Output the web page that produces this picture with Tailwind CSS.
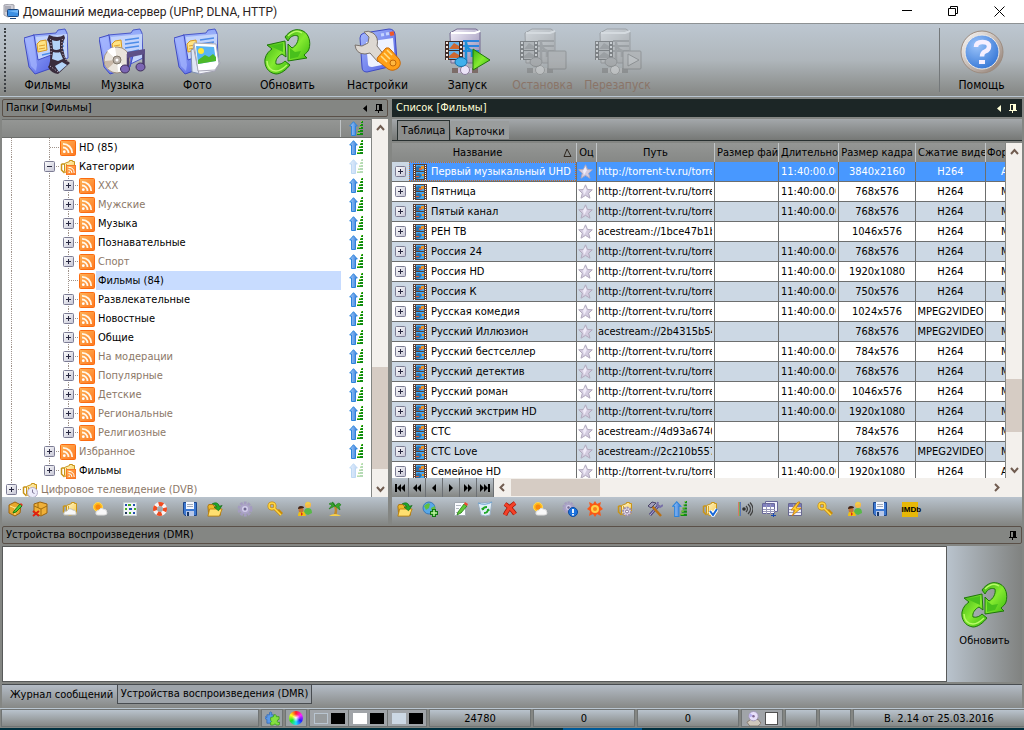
<!DOCTYPE html>
<html lang="ru">
<head>
    <meta charset="UTF-8">
    <meta name="viewport" content="width=device-width, initial-scale=1.0">
    <title>Домашний медиа-сервер (UPnP, DLNA, HTTP)</title>
    <script src="https://cdn.jsdelivr.net/npm/@tailwindcss/browser@4"></script>
</head>
<body class="h-screen flex flex-col overflow-hidden bg-[#848683] text-black text-[11px] leading-[14px] font-['DejaVu_Sans_Condensed','Noto_Sans',sans-serif]">
    <!-- icons -->
    <svg class="absolute w-0 h-0" aria-hidden="true">
        <defs>
            <linearGradient id="gBlue" x1="0" y1="0" x2="1" y2="1"><stop offset="0" stop-color="#a9bcff"/><stop offset="1" stop-color="#4c5be0"/></linearGradient>
            <linearGradient id="gPage" x1="0" y1="0" x2="0" y2="1"><stop offset="0" stop-color="#8fa6f8"/><stop offset="1" stop-color="#dbe8ff"/></linearGradient>
            <linearGradient id="gGreen" x1="0" y1="0" x2="1" y2="1"><stop offset="0" stop-color="#3cb014"/><stop offset="0.5" stop-color="#84ea30"/><stop offset="1" stop-color="#38b80e"/></linearGradient>
            <linearGradient id="gOrange" x1="0" y1="0" x2="1" y2="1"><stop offset="0" stop-color="#ffb458"/><stop offset="1" stop-color="#fd7820"/></linearGradient>
            <linearGradient id="gArrow" x1="0" y1="0" x2="1" y2="0"><stop offset="0" stop-color="#a8d0fc"/><stop offset="1" stop-color="#3478d8"/></linearGradient>
            <linearGradient id="gBox" x1="0" y1="0" x2="1" y2="1"><stop offset="0" stop-color="#ffffff"/><stop offset="1" stop-color="#c4c4d4"/></linearGradient>
            <linearGradient id="gYellow" x1="0" y1="0" x2="1" y2="1"><stop offset="0" stop-color="#fff8d0"/><stop offset="1" stop-color="#f8c848"/></linearGradient>
            <linearGradient id="gServer" x1="0" y1="0" x2="1" y2="1"><stop offset="0" stop-color="#f4f0fa"/><stop offset="1" stop-color="#9088b0"/></linearGradient>
            <linearGradient id="gRing" x1="0" y1="0" x2="1" y2="1"><stop offset="0" stop-color="#ffffff"/><stop offset="1" stop-color="#8c786c"/></linearGradient>
            <radialGradient id="gHelp" cx="0.35" cy="0.3" r="0.8"><stop offset="0" stop-color="#9cc4fa"/><stop offset="1" stop-color="#2f72d4"/></radialGradient>
        </defs>

        <symbol id="folder-big" viewBox="0 0 48 48">
            <path d="M9 7 32 5l2-3 7-1 2 4 1 25-31 15z" fill="url(#gPage)" stroke="#4a58c8" stroke-linejoin="round"/>
            <path d="M12 9l31-3v22l-29 12z" fill="#c3d4fc"/>
            <path d="M26 12l14-2M26 16l14-2M26 20l14-2M18 27l22-5" stroke="#4c8ce8" stroke-width="1.5"/>
            <path d="M13 16l3-3 6-1 1 10-9 2z" fill="#ffe484" stroke="#d89820"/>
            <path d="M15 18l6-1M15 21l6-1" stroke="#e0a030"/>
            <path d="M0 10l10-3 4 25 21-8-4 15-20 7-6-7z" fill="url(#gBlue)" stroke="#3f4bc4" stroke-linejoin="round"/>
            <path d="M2 11l7-2 4 28-1 6-5-5z" fill="#a5b6ff" opacity=".7"/>
        </symbol>
        <symbol id="films" viewBox="0 0 48 48">
            <use href="#folder-big"/>
            <path d="M25 7q9 4 15 0l1 3q-4 6-1 15 1 7 6 10l-12 11q-7-1-10-7 3-4 2-15 0-10-3-12z" fill="#392c3c"/>
            <path d="M28 12q5 2 8 0l0 9q-4 2-7 0zM29 24q5 1 7 0l3 7-5 2-6-2zM31 38l7-4 5 3-8 7z" fill="#b4d4f8"/>
            <path d="M26.500 11q1 8 .5 16M38.500 11q-2 9 1 17l4 6M26 38l8 6" fill="none" stroke="#d8cce0" stroke-dasharray="1 2"/>
        </symbol>
        <symbol id="music" viewBox="0 0 48 48">
            <use href="#folder-big"/>
            <circle cx="18" cy="32" r="13" fill="#e9e4dc" stroke="#a09080"/>
            <path d="M18 32 8 23a13 13 0 0 1 8-4zM18 32l9 9a13 13 0 0 1-8 3z" fill="#fff"/>
            <path d="M18 32 5.500 33a13 13 0 0 0 3 8z" fill="#c8b8a8"/>
            <circle cx="18" cy="32" r="4" fill="#b8b0a8" stroke="#80786c"/><circle cx="18" cy="32" r="1.500" fill="#fff"/>
            <path d="M29 26v14M44.500 23v15" stroke="#4c3f70" stroke-width="2.500"/>
            <path d="M28 24l18-3v5l-18 4z" fill="#5d5088"/>
            <ellipse cx="26" cy="41" rx="4.500" ry="4" fill="#7c66b4" stroke="#40305c"/>
            <ellipse cx="41.500" cy="39" rx="4.500" ry="4" fill="#7c66b4" stroke="#40305c"/>
        </symbol>
        <symbol id="photo" viewBox="0 0 48 48">
            <use href="#folder-big"/>
            <path d="M17 22l8-4 12 22-10 6-9-2z" fill="#dfe6f4" stroke="#8090b0"/>
            <path d="M19 17l19-2 8 20-5 8-16 3z" fill="#f4f6fc" stroke="#a0a0b0"/>
            <path d="M20 15l22 1 3 20-4 6-17 1z" fill="#fff" stroke="#a8a8b8"/>
            <path d="M22 18l18 1 2 14-18 3z" fill="#58b4f4"/>
            <circle cx="27" cy="23" r="3" fill="#ffe838"/>
            <path d="M24 32l7-5 4 2 4-3 3 3v4l-18 3z" fill="#4cb828"/>
        </symbol>
        <symbol id="refresh" viewBox="0 0 48 48">
            <g stroke="#1e7808" stroke-linejoin="round" fill="url(#gGreen)">
                <path d="M3 17l18-4 1 16-4-3c-4 2-7 6-6 10 4 1 7-1 9-3l5 4c-4 5-9 9-14 9C4 45 0 38 1 31c1-5 4-8 7-10z"/>
                <path d="M21 9C26 2 33 0 39 3c6 3 8 11 6 18-1 3-3 4-5 6l3 3-19 3V16l4 4c4-2 7-7 6-12-3-1-7-1-10 5z"/>
            </g>
            <path d="M3 33c0 6 4 10 9 10 4 0 8-3 11-6M24 8c5-5 10-6 14-3" fill="none" stroke="#b8fa68" stroke-width="1.500"/>
            <path d="M6 18l13-3v9zM26 20l5 4 6-1-3 6-8 2z" fill="#48c01c"/>
        </symbol>
        <symbol id="settings" viewBox="0 0 48 48">
            <path d="M6 10q0-4 4-5l25-4q5 0 6 5l2 27q0 4-4 5l-26 6q-5 0-5-5z" fill="url(#gBlue)" stroke="#3f4bc4"/>
            <path d="M12 14l27-4 2 22q0 3-3 3l-20 4q-4 0-4-3z" fill="#eef2ff"/>
            <path d="M27 7l3-.5M32 6l3-.5" stroke="#c4d4ff" stroke-width="3"/><path d="M36 6l4-.7" stroke="#f05828" stroke-width="4"/>
            <path d="M1 17q1 9 10 9l5-1 8 9 7-6-8-10q2-9-4-13-5-3-9-1l5 5-1 6-6 3z" fill="#ddd8d2" stroke="#7c746e"/>
            <path d="M24 29l8-9q3-1 5 2l8 9q3 5-1 9-5 4-10 1l-10-8q-2-2 0-4z" fill="#ffa018" stroke="#c86808"/>
            <path d="M27 28l6 6M30 25l6 6M33 22l5 5" stroke="#ffe088" stroke-width="1.500"/>
            <circle cx="39" cy="35" r="3" fill="#ffb840" stroke="#c06808"/>
        </symbol>
        <symbol id="server-base" viewBox="0 0 48 48">
            <path d="M6 5l7-4h19l4 3v31H7z" fill="url(#gServer)" stroke="#746a90"/>
            <path d="M7 5h24l5-2" fill="none" stroke="#fff" stroke-width="2"/>
            <path d="M19 13h16M19 18h16M19 23h16" stroke="#2c84dc" stroke-width="2"/>
            <path d="M21 35v5M8 42.500h26" stroke="#c8bcd8" stroke-width="5"/><path d="M8 40h6v5H8zM28 40h6v5h-6z" fill="#7c6c68"/>
            <circle cx="21" cy="42" r="4.500" fill="#ece4f8" stroke="#8a7c98"/>
            <path d="M1 13h18v19H1z" fill="#402c28"/>
            <path d="M5 14h10v8H5zM5 23h10v8H5z" fill="#68b4ec"/>
            <path d="M6 20l4-5 5 3v3H5zM5 28l5-4 5 3v3H5z" fill="#d06830"/>
            <path d="M3 14v18M17 14v18" stroke="#f4e8e0" stroke-width="2" stroke-dasharray="2 2"/>
            <path d="M22 13v20M22 15q1 6 6 8v6" fill="none" stroke="#1c90d8" stroke-width="2.500"/>
            <ellipse cx="17" cy="34" rx="6" ry="4.500" fill="#40b0ec" stroke="#1670a8"/>
        </symbol>
        <symbol id="start" viewBox="0 0 48 48"><use href="#server-base"/><path d="M29 21l17 11-17 10z" fill="url(#gGreen)" stroke="#1e7808" stroke-linejoin="round"/></symbol>
        <symbol id="stop" viewBox="0 0 48 48"><use href="#server-base"/><rect x="29" y="23" width="18" height="18" rx="1" fill="#a8a8a8" stroke="#606060"/></symbol>
        <symbol id="restart" viewBox="0 0 48 48"><use href="#server-base"/><rect x="29" y="23" width="18" height="18" rx="1" fill="#b0b0b0" stroke="#606060"/><path d="M34 26l11 6-11 6z" fill="#d0d0d0" stroke="#606060"/></symbol>
        <symbol id="help" viewBox="0 0 48 48">
            <circle cx="24" cy="24" r="21" fill="url(#gRing)" stroke="#9c8c80"/>
            <circle cx="24" cy="24" r="17" fill="url(#gHelp)" stroke="#f0ece8"/>
            <path d="M18 19q0-5 6.500-5t6.500 4.500q0 3.500-4 5-3 1.200-3 5" fill="none" stroke="#f6efff" stroke-width="4.500"/>
            <rect x="21" y="32" width="6" height="4" fill="#f6efff"/>
        </symbol>

        <symbol id="app" viewBox="0 0 16 16"><path d="M1 1l6-1 4 1v9l-6 3-4-2z" fill="#d0d0d8" stroke="#a0a0a8"/><path d="M2 3h6M2 5h6M2 7h4" stroke="#888894"/><rect x="4.500" y="5.500" width="11" height="7" rx="1" fill="#3c90e4" stroke="#1c4880"/><path d="M5 7l10-1v3z" fill="#74b8f8"/><path d="M7 14.500h6" stroke="#1c4880"/></symbol>
        <symbol id="plus" viewBox="0 0 11 11"><rect x=".5" y=".5" width="10" height="10" rx="1" fill="url(#gBox)" stroke="#7c7c94"/><path d="M3 5.500h5M5.500 3v5" stroke="#282840"/></symbol>
        <symbol id="minus" viewBox="0 0 11 11"><rect x=".5" y=".5" width="10" height="10" rx="1" fill="url(#gBox)" stroke="#7c7c94"/><path d="M3 5.500h5" stroke="#282840"/></symbol>
        <symbol id="rss" viewBox="0 0 16 16"><rect x=".5" y=".5" width="15" height="15" rx="1" fill="url(#gOrange)" stroke="#fc6c10"/><g fill="none" stroke="#fff8e8" stroke-width="1.800"><path d="M3 7.500a5.500 5.500 0 0 1 5.500 5.500M3 3.800A9.200 9.200 0 0 1 12.200 13"/></g><circle cx="4.300" cy="11.700" r="1.400" fill="#fff"/></symbol>
        <symbol id="folders" viewBox="0 0 16 16"><path d="M1.500 5v6l3 3M1.500 5h3" fill="none" stroke="#c89418" stroke-width="1.500"/><path d="M4.500 4.500v8l3 2 7-2V2.500h-2v-1h-3v1z" fill="url(#gYellow)" stroke="#c89418" stroke-linejoin="round"/><path d="M6.500 5v8" stroke="#d8a428"/></symbol>
        <symbol id="folder-rss" viewBox="0 0 16 16"><use href="#folders"/><rect x="6.500" y="6.500" width="9" height="9" fill="url(#gOrange)" stroke="#f87828"/><path d="M8.500 10.500a3.500 3.500 0 0 1 3.500 3.500M8.500 8.300q5.500 0 5.700 5.700" fill="none" stroke="#fff"/><circle cx="9.200" cy="13.300" r=".8" fill="#fff"/></symbol>
        <symbol id="folder-clock" viewBox="0 0 16 16"><use href="#folders"/><circle cx="10.500" cy="10.500" r="5" fill="#ecebfa" stroke="#b4acc8"/><path d="M10.500 7.500v3l2 1" fill="none" stroke="#807898"/></symbol>
        <symbol id="folder-cloud" viewBox="0 0 16 16"><use href="#folders"/><path d="M2 14q-1-4 3-4 2-4 6-1 4 0 3 5z" fill="#f8f8f8" stroke="#c0c0b8"/></symbol>
        <symbol id="folder-gear" viewBox="0 0 16 16"><use href="#folders"/><circle cx="10" cy="10.500" r="4" fill="#e0d8e8" stroke="#9c90ac" stroke-width="2" stroke-dasharray="2 1"/><circle cx="10" cy="10.500" r="1.500" fill="#fff" stroke="#806c90"/></symbol>
        <symbol id="folder-check" viewBox="0 0 16 16"><use href="#folders"/><path d="M8 10l3 4 4-6" fill="none" stroke="#fff" stroke-width="4"/><path d="M8 10l3 4 4-6" fill="none" stroke="#1868d8" stroke-width="2"/></symbol>
        <symbol id="sort" viewBox="0 0 15 15"><path d="M4.500.7L8.300 5H6.500v9.500h-4V5H.7z" fill="url(#gArrow)" stroke="#2c84dc"/><path d="M12 0h2v2h-2zM11 3h3v2h-3zM10 6h4v2h-4zM9 9h5v2H9zM8 12h6v2H8z" fill="#108c10"/><path d="M12 0h1v1h-1zM11 3h1v1h-1zM10 6h2v1h-2zM9 9h2v1H9zM8 12h3v1H8z" fill="#88d838"/></symbol>
        <symbol id="film" viewBox="0 0 14 16"><path d="M0 0h14v16H0z" fill="#5c4034"/><path d="M3 1h8v6H3zM3 8h8v7H3z" fill="#48a8f0"/><path d="M3 3l3-1 3 2-2 3H3zM3 10l3-1 3 2-2 3-4 1z" fill="#2c70a8"/><path d="M6 4h3v2H6zM3 12h3v1H3z" fill="#d86038"/><path d="M8 2h3v3H8zM9 10h2v2H9z" fill="#e89428"/><path d="M1.500 1v15M12.500 1v15" stroke="#fff" stroke-dasharray="1 1"/></symbol>
        <symbol id="star" viewBox="0 0 15 15"><path d="M7.500.8l2 4.700 4.800.3-3.700 3.400 1.400 5-4.500-2.800L3 14.200l1.300-5L.7 5.800l4.800-.3z" fill="#d4cce0" stroke="#b0a8bc"/><path d="M7.500 2.500l1.200 4L6 11l-1-4.500z" fill="#f0ecf8"/></symbol>
        <symbol id="pin" viewBox="0 0 8 9"><path d="M1 0h6v6h1v1H4v2H3V7H0V6h1zM2 1v5h2V1z" fill="currentColor" fill-rule="evenodd"/></symbol>

        <symbol id="box-edit" viewBox="0 0 16 16"><path d="M2 4l6-3 6 3-1 8-5 3-6-3z" fill="#e8a82c" stroke="#9c6410"/><path d="M3 5l5 2 5-2M8 7v7" fill="none" stroke="#ffe890"/><path d="M7 10l6-7 2 2-6 6-3 1z" fill="#50c838" stroke="#1c7810"/><path d="M13 3l1-1 2 2-1 1z" fill="#e83020"/></symbol>
        <symbol id="box-del" viewBox="0 0 16 16"><path d="M2 3l6-2 7 2v9l-6 3-7-3z" fill="#f0b038" stroke="#9c6410"/><path d="M2 5l7 3 6-3M9 8v6M6 2v5" fill="none" stroke="#a06c10"/><path d="M1 10l6 5M7 10l-6 5" stroke="#e02010" stroke-width="2"/></symbol>
        <symbol id="weather" viewBox="0 0 16 16"><circle cx="6" cy="6" r="4.500" fill="#ffb818" stroke="#ffd858"/><circle cx="6" cy="6" r="2.500" fill="#f88810"/><path d="M4 13q-1-3 3-4 2-3 4-1 4 0 4 4 0 2-3 2H6q-2 0-2-1z" fill="#f8f8f8" stroke="#dcdcdc"/></symbol>
        <symbol id="calendar" viewBox="0 0 16 16"><path d="M1.500 1.500h13v13h-13z" fill="#f0f4f8" stroke="#c8d0d0"/><path d="M3 3h2v2H3zM11 3h2v2h-2zM7 7h3v2H7zM11 11h2v2h-2z" fill="#2050b0"/><path d="M6 3h3v2H6zM3 7h2v2H3zM12 7h2v2h-2zM7 11h2v2H7z" fill="#48b020"/><path d="M3 11h2v2H3z" fill="#203858"/></symbol>
        <symbol id="buoy" viewBox="0 0 16 16"><circle cx="8" cy="8" r="5" fill="none" stroke="#f8f4f4" stroke-width="4"/><circle cx="8" cy="8" r="5" fill="none" stroke="#f04c20" stroke-width="4" stroke-dasharray="4.500 3.350" stroke-dashoffset="2"/></symbol>
        <symbol id="disk" viewBox="0 0 16 16"><path d="M1.500 1.500h13v13H3l-1.500-2z" fill="#3c78d0" stroke="#1c4488"/><path d="M4 1h8v7H4z" fill="#f4f8ff"/><path d="M5 3.500h6M5 5.500h6" stroke="#a0a8b8"/><path d="M4 10h8v5H4z" fill="#b8c8e8"/><path d="M5 11h2v4H5z" fill="#183868"/></symbol>
        <symbol id="open" viewBox="0 0 18 18"><path d="M1 6l1-2h5l1 2h7v10H2z" fill="#f0b828" stroke="#a87008"/><path d="M3 9h14l-3 8H1z" fill="#ffe070" stroke="#b88010"/><path d="M6 3q6-3 8 3l3-1-4 6-5-4h3q-1-3-5-4z" fill="#20a828" stroke="#0c6814" stroke-width=".7"/></symbol>
        <symbol id="gear" viewBox="0 0 16 16"><circle cx="8" cy="8" r="6" fill="none" stroke="#a49cc0" stroke-width="3" stroke-dasharray="2.700 1.070"/><circle cx="8" cy="8" r="4" fill="#d4d0ec" stroke="#aca4c8" stroke-width="2"/><circle cx="8" cy="8" r="1.500" fill="#706890"/></symbol>
        <symbol id="key" viewBox="0 0 16 16"><path d="M7 7l7 7M11 11l2-2M13 13l2-2" stroke="#c88c08" stroke-width="3"/><circle cx="5" cy="5" r="3" fill="none" stroke="#c88c08" stroke-width="3"/><circle cx="5" cy="5" r="3" fill="none" stroke="#ffd848" stroke-width="1.500"/><path d="M7 7l7 7" stroke="#ffd848" stroke-width="1.500"/></symbol>
        <symbol id="users" viewBox="0 0 16 16"><path d="M7 12q0-5 4-5t4 5l-4 2z" fill="#58b848"/><circle cx="11" cy="4" r="3" fill="#f8b848"/><path d="M8 4q1-4 4-3l2 2z" fill="#f0d048"/><path d="M1 15q0-5 3.500-5T9 15z" fill="#f0c010"/><path d="M4 11l2 2-2 2z" fill="#e02818"/><circle cx="4" cy="9" r="2.500" fill="#c87838"/><path d="M1 8q0-3 3-3t3 2z" fill="#402010"/></symbol>
        <symbol id="palm" viewBox="0 0 16 16"><path d="M8 5q2 4 0 9" fill="none" stroke="#c08828" stroke-width="2.500"/><path d="M8 5Q5 0 2 3l3 1-3 4 6-3 5 4-1-4 2-1q-2-4-6 1-1-4-3-4z" fill="#38a828" stroke="#187818" stroke-width=".6"/><path d="M2 15q6-4 12 0z" fill="#f8d048"/></symbol>
        <symbol id="globe-add" viewBox="0 0 16 16"><circle cx="7" cy="7" r="6" fill="#58a8e8" stroke="#3878b8"/><path d="M2 5q4-4 6-2l-1 4-3 2zM9 7l4-2v5l-3 1z" fill="#60c040"/><path d="M12 8v8M8 12h8" stroke="#107810" stroke-width="4"/><path d="M12 9v6M9 12h6" stroke="#c0f8a0" stroke-width="1.500"/></symbol>
        <symbol id="edit" viewBox="0 0 16 16"><path d="M2.500 1.500h11v13h-11z" fill="#fafcff" stroke="#a0a8b0"/><path d="M4 4.500h5M4 7.500h3M4 11.500h6" stroke="#b0b8c0"/><path d="M6 11l6-8 3 2-6 7-4 2z" fill="#60c838" stroke="#287818" stroke-width=".8"/><path d="M12 3l1-2 3 2-1 2z" fill="#f04830"/></symbol>
        <symbol id="recycle" viewBox="0 0 16 16"><path d="M1 2l14-1-2 13q-5 2-9 0z" fill="#e0eef8" stroke="#98acc0"/><path d="M1 2q7 3 14-1" fill="none" stroke="#68a0d0"/><path d="M6 9q0-3 4-3M6 9l-1-2M11 8q0 4-4 4M11 8l1 2" fill="none" stroke="#20a828" stroke-width="1.800"/></symbol>
        <symbol id="delete" viewBox="0 0 16 16"><path d="M3 3q6 4 10 10M13 2Q6 7 3 14" fill="none" stroke="#a01808" stroke-width="4.500"/><path d="M3 3q6 4 10 10M13 2Q6 7 3 14" fill="none" stroke="#f44028" stroke-width="3"/></symbol>
        <symbol id="gear-info" viewBox="0 0 16 16"><use href="#gear" width="13" height="13"/><circle cx="11" cy="11" r="4.500" fill="#1c74e0" stroke="#0c4ca0"/><path d="M11 8v4M11 13v1.500" stroke="#fff" stroke-width="1.800"/></symbol>
        <symbol id="burst" viewBox="0 0 16 16"><path d="M8 0l2 3 4-2-1 4 3 3-3 2 1 5-4-2-2 3-2-3-4 2 1-5-3-2 3-3-1-4 4 2z" fill="#f85818"/><circle cx="8" cy="8" r="4" fill="#ffd048"/><circle cx="8" cy="8" r="2" fill="#f88018"/></symbol>
        <symbol id="tools" viewBox="0 0 16 16"><path d="M3 14l9-10" stroke="#504880" stroke-width="3"/><path d="M3 14l9-10" stroke="#b8b0e0"/><path d="M4 4l10 11" stroke="#b87018" stroke-width="2.500"/><path d="M1 5l4-4 4 1-5 5z" fill="#a09cb8" stroke="#484468"/><path d="M11 1l-1 3 3 2 3-2" fill="none" stroke="#7870a8" stroke-width="2"/></symbol>
        <symbol id="sound" viewBox="0 0 16 16"><path d="M1.500 1v14" stroke="#d87868"/><path d="M2.500 1v14" stroke="#78a858"/><path d="M3.500 1v14" stroke="#5878b8"/><circle cx="7" cy="8" r="1.800" fill="#303030"/><path d="M9 5q3 3 0 6M11 3q5 5 0 10M13 1.500q6 6.500 0 13" fill="none" stroke="#404040" stroke-width="1.200"/></symbol>
        <symbol id="grid" viewBox="0 0 16 16"><path d="M3.500.5h12v10h-12z" fill="#f4f4ff" stroke="#686898"/><path d="M.5 2.500h12v10H.5z" fill="#fff" stroke="#686898"/><path d="M1 4.500h11" stroke="#8080c0" stroke-width="3"/><path d="M1 8.500h12M1 10.500h12M4.500 3v10M8.500 3v10" stroke="#9898b8"/><path d="M9 14.500h5M11.500 12v4" stroke="#1848b0"/></symbol>
        <symbol id="flash" viewBox="0 0 16 16"><path d="M1.500 2.500h13v12h-13z" fill="#f0f0fc" stroke="#686890"/><path d="M2 4.500h12" stroke="#7878b8" stroke-width="3"/><path d="M2 8.500h12M2 11.500h12M6.500 3v11" stroke="#9c9cb8"/><path d="M11 1L4 9h4l-3 6 9-8H9l4-6z" fill="#ffd030" stroke="#c87808" stroke-width=".8"/></symbol>
        <symbol id="puzzle" viewBox="0 0 16 16"><path d="M2 4h3q-1-3 1-3t1 3h2v9H2V9q-2 0-2-2t2 0z" fill="#5898e8" stroke="#3468b0" stroke-width=".8"/><path d="M6 7l3-1q0-3 2-2t1 2l3 0v3q-2 0-2 2t3 1l-1 3h-3q-1-2-2-1l-1 1H6v-3q2-1 0-2z" fill="#84e040" stroke="#389818" stroke-width=".8"/></symbol>
        <symbol id="drive" viewBox="0 0 16 16"><path d="M1 12l4-3h8l3 4-3 3H4z" fill="#d0c8bc" stroke="#84786c"/><circle cx="8" cy="5.500" r="5" fill="#e8e0fa" stroke="#a098b8"/><path d="M8 5L4 2.500 3.500 7z" fill="#b8b0f0"/><circle cx="8" cy="5.500" r="1.300" fill="#806890"/></symbol>
    </svg>

    <!-- window title -->
    <header class="h-[23px] shrink-0 bg-white flex items-center pl-[3px] text-[12px] text-[#2a2220]">
        <svg class="size-4 mr-1"><use href="#app"/></svg>
        <h1 class="flex-1 font-['Roboto',sans-serif]">Домашний медиа-сервер (UPnP, DLNA, HTTP)</h1>
        <button class="w-[46px] h-full flex items-center justify-center" aria-label="Свернуть"><svg class="size-[11px]" stroke="#000"><path d="M0 4.500h10"/></svg></button>
        <button class="w-[46px] h-full flex items-center justify-center" aria-label="Восстановить"><svg class="size-[11px]" fill="none" stroke="#000"><path d="M.5 2.500h7v7h-7zM2.500 2.500v-2h7v7h-2"/></svg></button>
        <button class="w-[46px] h-full flex items-center justify-center mr-0.5" aria-label="Закрыть"><svg class="size-[11px]" stroke="#000"><path d="M.5.5l10 10M10.500.5l-10 10"/></svg></button>
    </header>

    <!-- main toolbar -->
    <nav class="h-[74px] shrink-0 flex items-stretch pl-1 pr-[5px] border-t border-t-[#8e9294] border-b border-b-[#b9c5d0] bg-linear-to-b from-[#bdc7d1] via-[#afb6bb] to-[#848683] text-[12px]">
        <div class="w-[2px] mt-1 mb-1 mr-1 border-l-2 border-dotted border-[#3c4044]"></div>
        <div class="flex flex-1 gap-[15px]">
            <div class="flex" id="toolsMedia"></div>
            <div class="flex" id="toolsRefresh"></div>
            <div class="flex" id="toolsSettings"></div>
            <div class="flex" id="toolsServer"></div>
        </div>
        <div class="border-l border-[#74787a] my-1 mr-1"></div>
        <div class="flex" id="toolsHelp"></div>
    </nav>

    <main class="flex-1 min-h-0 flex gap-1 px-[2px] pt-[2px] pb-px">
        <!-- folders -->
        <section class="w-[386px] flex flex-col min-h-0">
            <div class="h-[18px] shrink-0 mb-[2px] flex items-center border border-[#5a5048] rounded-xs px-[3px]">
                <h2 class="flex-1">Папки [Фильмы]</h2>
                <svg class="w-[4px] h-[7px] mr-2"><path d="M4 0v7L0 3.500z"/></svg>
                <svg class="w-[8px] h-[9px] mr-px"><use href="#pin"/></svg>
            </div>
            <div class="flex-1 min-h-0 flex">
                <div class="flex-1 flex flex-col bg-white overflow-hidden">
                    <div class="h-[19px] shrink-0 flex border-t border-t-[#6c6e6c] border-b border-b-[#6c6e6c] bg-linear-to-b from-[#949694] to-[#868886]">
                        <div class="flex-1 border-r border-[#c0c4c6]"></div>
                        <div class="w-[30px] flex justify-center items-center"><svg class="size-[15px]"><use href="#sort"/></svg></div>
                    </div>
                    <ul id="tree"></ul>
                </div>
                <div class="w-4 ml-px bg-[#f3f0ec] flex flex-col items-center">
                    <svg class="h-[16px] w-[9px] shrink-0" viewBox="0 0 9 16" fill="none" stroke="#705c50" stroke-width="2"><path d="M1 11l3.500-4L8 11"/></svg>
                    <div class="flex-1"></div>
                    <div class="w-full h-[102px] bg-[#d6ccc4]"></div>
                    <div class="h-[12px]"></div>
                    <svg class="h-[16px] w-[9px] shrink-0" viewBox="0 0 9 16" fill="none" stroke="#705c50" stroke-width="2"><path d="M1 6l3.500 4L8 6"/></svg>
                </div>
            </div>
            <div id="treeTools" class="h-[28px] shrink-0 flex gap-[5px] pb-1 bg-linear-to-b from-[#b9c3cd] to-[#848683]"></div>
        </section>

        <!-- list -->
        <section class="flex-1 min-w-0 flex flex-col min-h-0">
            <div class="h-[18px] shrink-0 mb-[2px] flex items-center bg-[#1c2626] text-[#ffffd8] px-1">
                <h2 class="flex-1">Список [Фильмы]</h2>
                <svg class="w-[4px] h-[7px] mr-2" fill="currentColor"><path d="M4 0v7L0 3.500z"/></svg>
                <svg class="w-[8px] h-[9px] mr-px"><use href="#pin"/></svg>
            </div>
            <div class="h-[22px] shrink-0 mb-[2px] flex items-end pl-[5px] border-b border-[#283030] bg-linear-to-b from-[#a4a8ab] to-[#767876]">
                <button class="h-[20px] w-[53px] pt-px border border-b-0 border-[#283030] bg-[#8c8e8d]">Таблица</button>
                <button class="h-[18px] w-[58px] pt-[3px] mb-px ml-px bg-[#9a9d9d]">Карточки</button>
            </div>
            <div class="flex-1 min-h-0 flex">
                <div class="flex-1 min-w-0 bg-white overflow-hidden">
                    <table class="w-full table-fixed border-separate border-spacing-0 whitespace-nowrap">
                        <colgroup>
                            <col class="w-[185px]"><col class="w-[20px]"><col class="w-[118px]"><col class="w-[64px]"><col class="w-[60px]"><col class="w-[77px]"><col class="w-[70px]"><col>
                        </colgroup>
                        <thead>
                            <tr class="h-[19px] bg-linear-to-b from-[#949694] to-[#868886]">
                                <th class="p-0 font-normal border-r border-[#c0c4c6] overflow-hidden"><div class="flex items-center"><span class="flex-1">Название</span><svg class="size-[9px] mr-1" fill="none" stroke="#302820"><path d="M1 8.500L4 1l4 7.500z"/></svg></div></th>
                                <th class="p-0 font-normal border-r border-[#c0c4c6] overflow-hidden">Оц</th>
                                <th class="p-0 font-normal border-r border-[#c0c4c6] overflow-hidden">Путь</th>
                                <th class="p-0 font-normal border-r border-[#c0c4c6] overflow-hidden text-left pl-[2px]">Размер фай</th>
                                <th class="p-0 font-normal border-r border-[#c0c4c6] overflow-hidden text-left pl-[2px]">Длительно</th>
                                <th class="p-0 font-normal border-r border-[#c0c4c6] overflow-hidden">Размер кадра</th>
                                <th class="p-0 font-normal border-r border-[#c0c4c6] overflow-hidden text-left pl-[2px]">Сжатие виде</th>
                                <th class="p-0 font-normal overflow-hidden text-left pl-px">Фор</th>
                            </tr>
                        </thead>
                        <tbody id="channels"></tbody>
                    </table>
                </div>
                <div class="w-4 ml-px bg-[#f3f0ec] flex flex-col items-center">
                    <svg class="h-[17px] w-[9px] shrink-0" viewBox="0 0 9 17" fill="none" stroke="#705c50" stroke-width="2"><path d="M1 11l3.500-4L8 11"/></svg>
                    <div class="flex-1"></div>
                    <div class="w-full h-[53px] bg-[#d6ccc4]"></div>
                    <div class="h-[30px]"></div>
                    <svg class="h-[16px] w-[9px] shrink-0" viewBox="0 0 9 16" fill="none" stroke="#705c50" stroke-width="2"><path d="M1 6l3.500 4L8 6"/></svg>
                </div>
            </div>
            <div class="h-[19px] shrink-0 flex bg-[#f3f0ec]">
                <div class="flex" id="navButtons"></div>
                <div class="flex-1 flex items-center">
                    <svg class="h-[9px] w-[17px]" viewBox="0 0 17 9" fill="none" stroke="#705c50" stroke-width="2"><path d="M10 1L6.500 4.500 10 8"/></svg>
                    <div class="w-[89px] h-[17px] bg-[#d6ccc4]"></div>
                    <div class="flex-1"></div>
                    <svg class="h-[9px] w-[17px] mr-4" viewBox="0 0 17 9" fill="none" stroke="#705c50" stroke-width="2"><path d="M6 1l3.500 3.500L6 8"/></svg>
                </div>
            </div>
            <div id="listTools" class="h-[28px] shrink-0 flex gap-[5px] pb-1 bg-linear-to-b from-[#b9c3cd] to-[#848683]"></div>
        </section>
    </main>

    <!-- playback devices -->
    <section class="shrink-0 px-[2px]">
        <div class="h-[18px] mb-[2px] flex items-center border border-[#5a5048] rounded-xs px-[3px]">
            <h2 class="flex-1">Устройства воспроизведения (DMR)</h2>
            <svg class="w-[8px] h-[9px] mr-px"><use href="#pin"/></svg>
        </div>
        <div class="h-[136px] flex">
            <div class="flex-1 bg-white border border-[#585a5a]"></div>
            <button class="w-[75px] flex flex-col items-center justify-center gap-[5px] bg-linear-to-r from-[#b9c3cd] to-[#808280]">
                <svg class="size-12"><use href="#refresh"/></svg>
                <span>Обновить</span>
            </button>
        </div>
        <div class="mt-[2px] h-[24px] flex items-start border-t border-[#484c50] bg-linear-to-b from-[#b4bcc6] to-[#868886]">
            <button class="h-[19px] w-[115px] pl-1">Журнал сообщений</button>
            <button class="h-[19px] w-[195px] border border-t-0 border-[#484c50] bg-[#9ea4aa]">Устройства воспроизведения (DMR)</button>
        </div>
    </section>

    <footer class="h-[20px] shrink-0 flex gap-[2px] pl-px pb-px border-t border-[#b9c5d0] text-center leading-[17px]">
        <div class="flex-1 border border-[#707474] bg-linear-to-b from-[#b9c3cd] to-[#868886]"></div>
        <button class="w-[22px] border border-[#707474] bg-[#9aa0a4] flex items-center justify-center" aria-label="Модули"><svg class="size-[15px]"><use href="#puzzle"/></svg></button>
        <button class="w-[22px] border border-[#707474] bg-[#9aa0a4] flex items-center justify-center" aria-label="Цвета"><span class="size-[14px] rounded-full bg-[radial-gradient(circle,#ffffff_0%,transparent_40%),conic-gradient(#ff2020,#ff20ff,#2020ff,#20e0ff,#20e020,#ffff20,#ff2020)]"></span></button>
        <div class="w-[118px] flex border border-[#707474] bg-[#a0a4a8]">
            <div class="flex-1 flex items-center justify-center gap-[3px] border-r border-[#707474]"><span class="w-[14px] h-[11px] border border-[#b9c5d0] bg-[#989c9e]"></span><span class="w-[14px] h-[11px] bg-black"></span></div>
            <div class="flex-1 flex items-center justify-center gap-[3px] border-r border-[#707474]"><span class="w-[14px] h-[11px] bg-white"></span><span class="w-[14px] h-[11px] bg-black"></span></div>
            <div class="flex-1 flex items-center justify-center gap-[3px]"><span class="w-[14px] h-[11px] bg-[#ccd8e4]"></span><span class="w-[14px] h-[11px] bg-black"></span></div>
        </div>
        <div class="w-[102px] border border-[#707474] bg-linear-to-b from-[#b9c3cd] to-[#868886]">24780</div>
        <div class="w-[102px] border border-[#707474] bg-linear-to-b from-[#b9c3cd] to-[#868886]">0</div>
        <div class="w-[102px] border border-[#707474] bg-linear-to-b from-[#b9c3cd] to-[#868886]">0</div>
        <div class="w-[42px] border border-[#707474] bg-[#a0a4a8] flex items-center justify-center gap-1"><svg class="size-[15px]"><use href="#drive"/></svg><input type="checkbox" aria-label="Диск" class="appearance-none size-[13px] bg-white border border-[#505050]"></div>
        <div class="w-[32px] border border-[#707474] bg-linear-to-b from-[#b9c3cd] to-[#868886]"></div>
        <div class="w-[32px] border border-[#707474] bg-linear-to-b from-[#b9c3cd] to-[#868886]"></div>
        <div class="w-[171px] border border-r-0 border-[#707474] bg-linear-to-b from-[#b9c3cd] to-[#868886]">В. 2.14 от 25.03.2016</div>
    </footer>
    <div class="h-[2px] shrink-0 bg-[#00303f] flex justify-center"><div class="w-[79px] ml-[180px] bg-[#005a98]"></div></div>

    <script>
        const $ = id => document.getElementById(id);
        const icon = (name, cls) => `<svg class="${cls}"><use href="#${name}"/></svg>`;

        // main toolbar
        const bigButton = ([name, label, off]) => `<button class="w-[75px] pt-1 flex flex-col items-center gap-[2px] ${off ? 'text-[#8a7468]' : ''}" ${off ? 'disabled' : ''}>${icon(name, off ? 'size-12 grayscale opacity-40' : 'size-12')}<span>${label}</span></button>`;
        $('toolsMedia').innerHTML = [['films', 'Фильмы'], ['music', 'Музыка'], ['photo', 'Фото']].map(bigButton).join('');
        $('toolsRefresh').innerHTML = bigButton(['refresh', 'Обновить']);
        $('toolsSettings').innerHTML = bigButton(['settings', 'Настройки']);
        $('toolsServer').innerHTML = [['start', 'Запуск'], ['stop', 'Остановка', true], ['restart', 'Перезапуск', true]].map(bigButton).join('');
        $('toolsHelp').innerHTML = bigButton(['help', 'Помощь']);

        // tree: label, cells before the icon, icon, muted, sort arrow (1 - on, 2 - faded)
        // cells: | line, space - empty, L leaf, + closed, - open, E last closed
        const tree = [
            ['HD (85)', '| L', 'rss', 0, 1],
            ['Категории', '| -', 'folder-rss', 0, 2],
            ['XXX', '| |+', 'rss', 1, 1],
            ['Мужские', '| |+', 'rss', 1, 1],
            ['Музыка', '| |+', 'rss', 0, 1],
            ['Познавательные', '| |+', 'rss', 0, 1],
            ['Спорт', '| |+', 'rss', 1, 1],
            ['Фильмы (84)', '| |L', 'rss', 0, 1],
            ['Развлекательные', '| |+', 'rss', 0, 1],
            ['Новостные', '| |+', 'rss', 0, 1],
            ['Общие', '| |+', 'rss', 0, 1],
            ['На модерации', '| |+', 'rss', 1, 1],
            ['Популярные', '| |+', 'rss', 1, 1],
            ['Детские', '| |+', 'rss', 1, 1],
            ['Региональные', '| |+', 'rss', 1, 1],
            ['Религиозные', '| |E', 'rss', 1, 1],
            ['Избранное', '| +', 'rss', 1, 1],
            ['Фильмы', '| E', 'folder-rss', 0, 2],
            ['Цифровое телевидение (DVB)', 'E', 'folder-clock', 1, 0],
        ];
        const cell = c => {
            if (c === ' ') return '<span class="w-[19px]"></span>';
            const down = c === 'E' ? 'M9.5 0v9' : 'M9.5 0v19';
            const side = c === '|' ? '' : 'M10 9.5h9';
            const box = c === '+' || c === 'E' ? '<use href="#plus" x="4" y="4" width="11" height="11"/>' : c === '-' ? '<use href="#minus" x="4" y="4" width="11" height="11"/>' : '';
            return `<svg class="w-[19px] h-[19px]"><path d="${down}${side}" fill="none" stroke="#a0948c" stroke-dasharray="1 1"/>${box}</svg>`;
        };
        $('tree').innerHTML = tree.map(([label, cells, ic, muted, sort]) => `
            <li class="h-[19px] flex items-center">
                ${[...cells].map(cell).join('')}
                ${icon(ic, 'size-4 ml-px mr-px shrink-0')}
                <span class="flex-1 h-full leading-[19px] pl-[2px] whitespace-nowrap ${muted ? 'text-[#8c7868]' : ''} ${label === 'Фильмы (84)' ? 'bg-[#c8dcff]' : ''}">${label}</span>
                <span class="w-[30px] flex justify-center">${sort ? icon('sort', sort === 2 ? 'size-[15px] opacity-30' : 'size-[15px]') : ''}</span>
            </li>`).join('');

        // channels: name, path, duration, frame, codec, format
        const T = 'http://torrent-tv.ru/torrent', D = '11:40:00.000';
        const channels = [
            ['Первый музыкальный UHD', T, D, '3840x2160', 'H264', 'A'],
            ['Пятница', T, D, '768x576', 'H264', 'M'],
            ['Пятый канал', T, D, '768x576', 'H264', 'M'],
            ['РЕН ТВ', 'acestream://1bce47b1b', '', '1046x576', 'H264', 'M'],
            ['Россия 24', T, D, '768x576', 'H264', 'M'],
            ['Россия HD', T, D, '1920x1080', 'H264', 'M'],
            ['Россия К', T, D, '750x576', 'H264', 'M'],
            ['Русская комедия', T, D, '1024x576', 'MPEG2VIDEO', 'M'],
            ['Русский Иллюзион', 'acestream://2b4315b54', '', '768x576', 'MPEG2VIDEO', 'M'],
            ['Русский бестселлер', T, D, '784x576', 'H264', 'M'],
            ['Русский детектив', T, D, '768x576', 'H264', 'M'],
            ['Русский роман', T, D, '1046x576', 'H264', 'M'],
            ['Русский экстрим HD', T, D, '1920x1080', 'H264', 'M'],
            ['СТС', 'acestream://4d93a6740', '', '784x576', 'H264', 'M'],
            ['СТС Love', 'acestream://2c210b557', '', '768x576', 'MPEG2VIDEO', 'M'],
            ['Семейное HD', T, D, '1920x1080', 'H264', 'A'],
        ];
        const td = 'p-0 border-r border-b border-[#6c6e6e] overflow-hidden';
        $('channels').innerHTML = channels.map(([name, path, dur, frame, codec, fmt], i) => `
            <tr class="h-[20px] ${i === 0 ? 'bg-[#4898ff] text-white' : i % 2 ? 'bg-white' : 'bg-[#ccd8e4]'}">
                <td class="${td}"><div class="flex items-center h-[19px]"><span class="w-[17px] h-full flex items-center justify-center ${i === 0 ? 'bg-[#ccd8e4]' : ''}">${icon('plus', 'size-[11px]')}</span><span class="flex-1 h-full flex items-center pl-[3px] border border-dotted ${i === 0 ? 'border-[#d07020]' : 'border-transparent'}">${icon('film', 'w-[14px] h-[16px] mr-1')}${name}</span></div></td>
                <td class="${td}">${icon('star', 'size-[15px] ml-px')}</td>
                <td class="${td}"><div class="ml-px mr-[2px] overflow-hidden">${path}</div></td>
                <td class="${td}"></td>
                <td class="${td}"><div class="mx-[2px] overflow-hidden">${dur}</div></td>
                <td class="${td} text-center">${frame}</td>
                <td class="${td} text-center">${codec}</td>
                <td class="p-0 border-b border-[#6c6e6e] overflow-hidden"><div class="pl-[15px]">${fmt}</div></td>
            </tr>`).join('');

        // record navigation
        const nav = [
            ['Первая', 'M0 0h2v8H0zM6 0v8L2 4zM10 0v8L6 4z'],
            ['Страница назад', 'M5 0v8L1 4zM9 0v8L5 4z'],
            ['Назад', 'M7 0v8L3 4z'],
            ['Вперёд', 'M3 0v8l4-4z'],
            ['Страница вперёд', 'M1 0v8l4-4zM5 0v8l4-4z'],
            ['Последняя', 'M0 0v8l4-4zM4 0v8l4-4zM8 0h2v8H8z'],
        ];
        $('navButtons').innerHTML = nav.map(([label, d]) => `<button aria-label="${label}" class="w-[17px] flex items-center justify-center border-r border-[#6c7074] bg-linear-to-b from-[#b9c3cd] to-[#848683]"><svg class="w-[10px] h-[8px]"><path d="${d}"/></svg></button>`).join('');

        // small toolbars, icons by groups
        const imdb = `<span class="w-4 h-[15px] bg-[#e8b808] text-[8px] leading-[15px] font-bold font-['Liberation_Sans_Narrow','Liberation_Sans',sans-serif]">IMDb</span>`;
        const small = groups => groups.map(g => `<div class="flex ${g[0] === 'sound' ? 'ml-[5px]' : ''}">${g.map(n => `<button aria-label="${n}" class="w-[25px] flex items-center justify-center">${n === 'imdb' ? imdb : icon(n, 'size-4')}</button>`).join('')}</div>`).join('');
        $('treeTools').innerHTML = small([['box-edit', 'box-del'], ['folder-cloud'], ['weather'], ['calendar'], ['buoy'], ['disk', 'open'], ['gear'], ['key'], ['users'], ['palm']]);
        $('listTools').innerHTML = small([['open', 'globe-add'], ['edit', 'recycle', 'delete'], ['weather'], ['gear-info', 'burst'], ['folder-gear'], ['tools', 'sort'], ['folder-check'], ['sound', 'grid', 'flash'], ['key'], ['users', 'disk'], ['imdb']]);
    </script>
</body>
</html>
